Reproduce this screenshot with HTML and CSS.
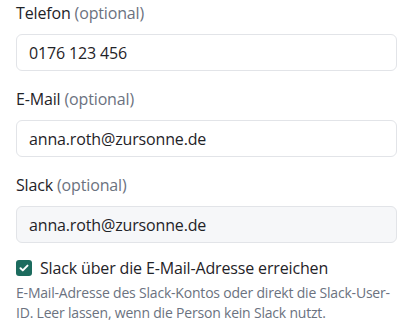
FILE: index.html
```html
<!DOCTYPE html>
<html lang="de">
<head>
<meta charset="utf-8">
<link rel="stylesheet" href="styles.css">
</head>
<body>
<form class="form">
  <div class="field">
    <label class="label" for="tel">Telefon <span class="opt">(optional)</span></label>
    <input class="input" id="tel" type="text" value="0176 123 456">
  </div>
  <div class="field">
    <label class="label" for="mail">E-Mail <span class="opt">(optional)</span></label>
    <input class="input" id="mail" type="text" value="anna.roth@zursonne.de">
  </div>
  <div class="field">
    <label class="label" for="slack">Slack <span class="opt">(optional)</span></label>
    <input class="input input-muted" id="slack" type="text" value="anna.roth@zursonne.de" readonly>
  </div>
  <label class="check">
    <span class="box"><svg viewBox="0 0 16 16" width="16" height="16"><path d="M4.5 8.2l2.3 2.2 4.7-4.8" fill="none" stroke="#fff" stroke-width="2" stroke-linecap="round" stroke-linejoin="round"/></svg></span>
    <span class="check-text">Slack über die E-Mail-Adresse erreichen</span>
  </label>
  <p class="help">E-Mail-Adresse des Slack-Kontos oder direkt die Slack-User-ID. Leer lassen, wenn die Person kein Slack nutzt.</p>
</form>
</body>
</html>
```
FILE: styles.css
```css
* { box-sizing: border-box; }
html, body { margin: 0; background: #fff; }
body {
  font-family: "Open Sans", "Noto Sans", sans-serif;
  color: #1f2328;
  padding: 2px 17px 0 16px;
  letter-spacing: -0.15px;
}
.form { display: flex; flex-direction: column; }
.field { display: flex; flex-direction: column; gap: 10px; margin-bottom: 17px; }
.label { font-size: 16px; line-height: 22px; }
.opt { color: #6b7280; }
.input {
  font: inherit;
  font-size: 16px;
  letter-spacing: -0.15px;
  color: #1f2328;
  height: 37px;
  padding: 0 12px;
  border: 1px solid #e2e4e8;
  border-radius: 6px;
  background: #fff;
  width: 100%;
  outline: none;
}
.input-muted { background: #f6f7f9; }
.check { display: flex; align-items: center; gap: 8px; font-size: 16px; line-height: 22px; margin-top: -3px; }
.box {
  width: 16px; height: 16px; border-radius: 3px; background: #1c6b5e;
  display: flex; align-items: center; justify-content: center; flex: none;
}
.box svg { display: block; }
.help { margin: 4px 0 0; font-size: 14px; letter-spacing: -0.2px; line-height: 20px; color: #6b7280; }
```
